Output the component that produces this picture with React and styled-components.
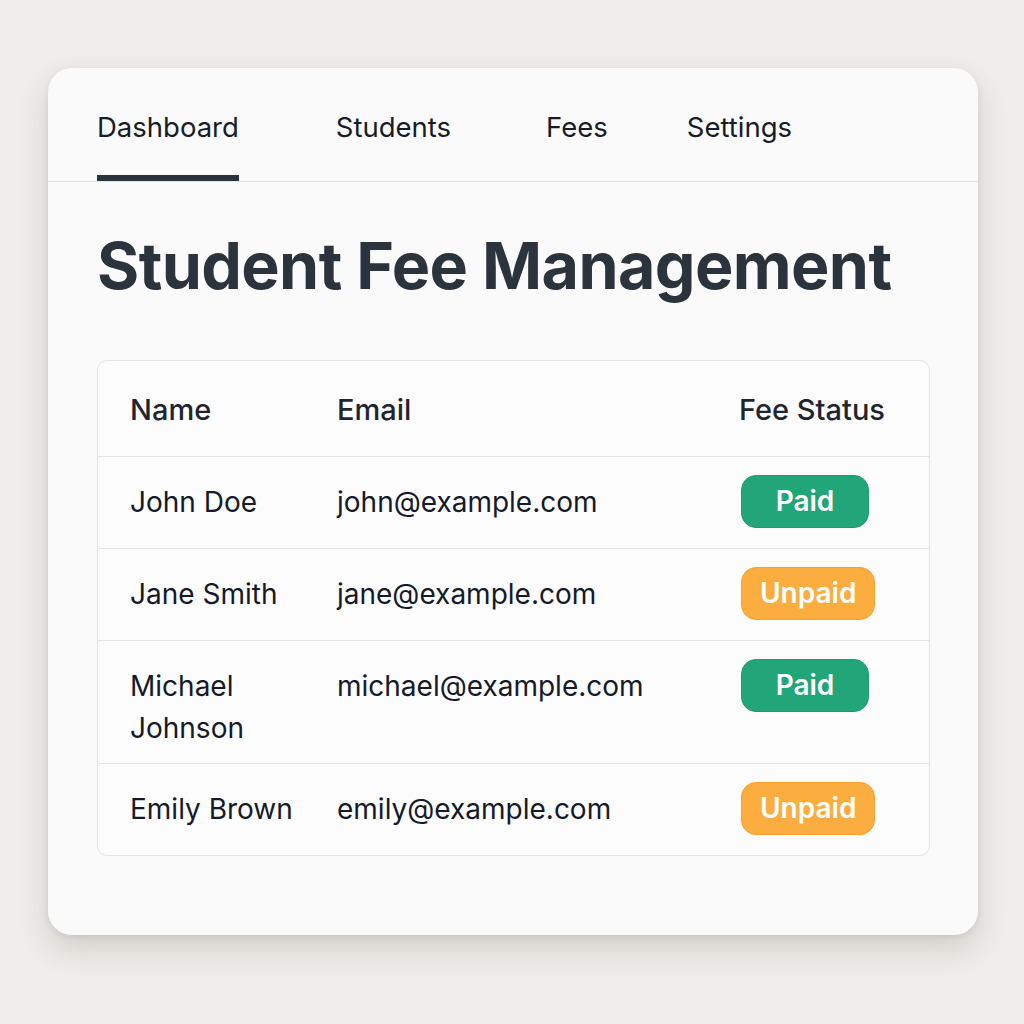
import React from "react";
import styled, { createGlobalStyle } from "styled-components";

const Global = createGlobalStyle`
  html, body { margin: 0; padding: 0; }
  body {
    background: #efedea;
    font-family: Inter, "Noto Sans", "Liberation Sans", sans-serif;
    color: #141a26;
    -webkit-font-smoothing: antialiased;
  }
`;

const Page = styled.div`
  width: 1024px;
  height: 1024px;
  box-sizing: border-box;
  padding: 68px 46px 0 48px;
`;

const Card = styled.div`
  width: 930px;
  height: 867px;
  box-sizing: border-box;
  background: #fafafa;
  border-radius: 24px;
  box-shadow: 0 14px 30px rgba(60, 50, 40, 0.16), 0 2px 6px rgba(60, 50, 40, 0.08);
  overflow: hidden;
`;

const TabBar = styled.nav`
  display: flex;
  padding-left: 49px;
  border-bottom: 1px solid #e3e3e3;
`;

const Tab = styled.div`
  box-sizing: border-box;
  height: 113px;
  padding-top: 41px;
  margin-right: ${(p) => p.$space}px;
  font-size: 27.5px;
  line-height: 36px;
  font-weight: 400;
  color: #161c28;
  border-bottom: 6px solid ${(p) => (p.$active ? "#2b333c" : "transparent")};
`;

const Body = styled.div`
  padding: 44px 48px 0 49px;
`;

const Title = styled.h1`
  margin: 0 0 54px;
  font-size: 64.5px;
  line-height: 80px;
  font-weight: 700;
  letter-spacing: -0.6px;
  color: #2b333c;
`;

const Table = styled.table`
  width: 833px;
  border-collapse: separate;
  border-spacing: 0;
  table-layout: fixed;
  border: 1px solid #e2e2e2;
  border-radius: 10px;
  background: #fcfcfc;
`;

const Th = styled.th`
  text-align: left;
  font-size: 29px;
  line-height: 36px;
  font-weight: 500;
  color: #1e2530;
  padding: 31px 0 28px 32px;
  border-bottom: 1px solid #e4e4e4;
`;

const Td = styled.td`
  vertical-align: top;
  font-size: 28px;
  line-height: 42px;
  font-weight: 400;
  color: #141a2a;
  padding: ${(p) => (p.$badge ? "18px 0 20px 34px" : "24px 0 14px 32px")};
  border-bottom: ${(p) => (p.$last ? "none" : "1px solid #e4e4e4")};
`;

const Badge = styled.span`
  display: inline-block;
  box-sizing: border-box;
  height: 53px;
  padding: 0 18px;
  min-width: 128px;
  text-align: center;
  border-radius: 15px;
  font-size: 28px;
  line-height: 51px;
  font-weight: 600;
  color: #ffffff;
  background: ${(p) => (p.$paid ? "#23a57a" : "#fbae3f")};
  border: 1px solid ${(p) => (p.$paid ? "#1e9a70" : "#f6a12c")};
`;

const tabs = [
  { label: "Dashboard", space: 97, active: true },
  { label: "Students", space: 95 },
  { label: "Fees", space: 79 },
  { label: "Settings", space: 0 },
];

const rows = [
  { name: "John Doe", email: "john@example.com", paid: true },
  { name: "Jane Smith", email: "jane@example.com", paid: false },
  { name: "Michael Johnson", email: "michael@example.com", paid: true },
  { name: "Emily Brown", email: "emily@example.com", paid: false },
];

export default function App() {
  return (
    <>
      <Global />
      <Page>
        <Card>
          <TabBar>
            {tabs.map((t) => (
              <Tab key={t.label} $active={t.active} $space={t.space}>
                {t.label}
              </Tab>
            ))}
          </TabBar>
          <Body>
            <Title>Student Fee Management</Title>
            <Table>
              <colgroup>
                <col style={{ width: "207px" }} />
                <col style={{ width: "402px" }} />
                <col />
              </colgroup>
              <thead>
                <tr>
                  <Th>Name</Th>
                  <Th>Email</Th>
                  <Th>Fee Status</Th>
                </tr>
              </thead>
              <tbody>
                {rows.map((r, i) => {
                  const last = i === rows.length - 1;
                  return (
                    <tr key={r.email}>
                      <Td $last={last}>{r.name}</Td>
                      <Td $last={last}>{r.email}</Td>
                      <Td $last={last} $badge>
                        <Badge $paid={r.paid}>{r.paid ? "Paid" : "Unpaid"}</Badge>
                      </Td>
                    </tr>
                  );
                })}
              </tbody>
            </Table>
          </Body>
        </Card>
      </Page>
    </>
  );
}
